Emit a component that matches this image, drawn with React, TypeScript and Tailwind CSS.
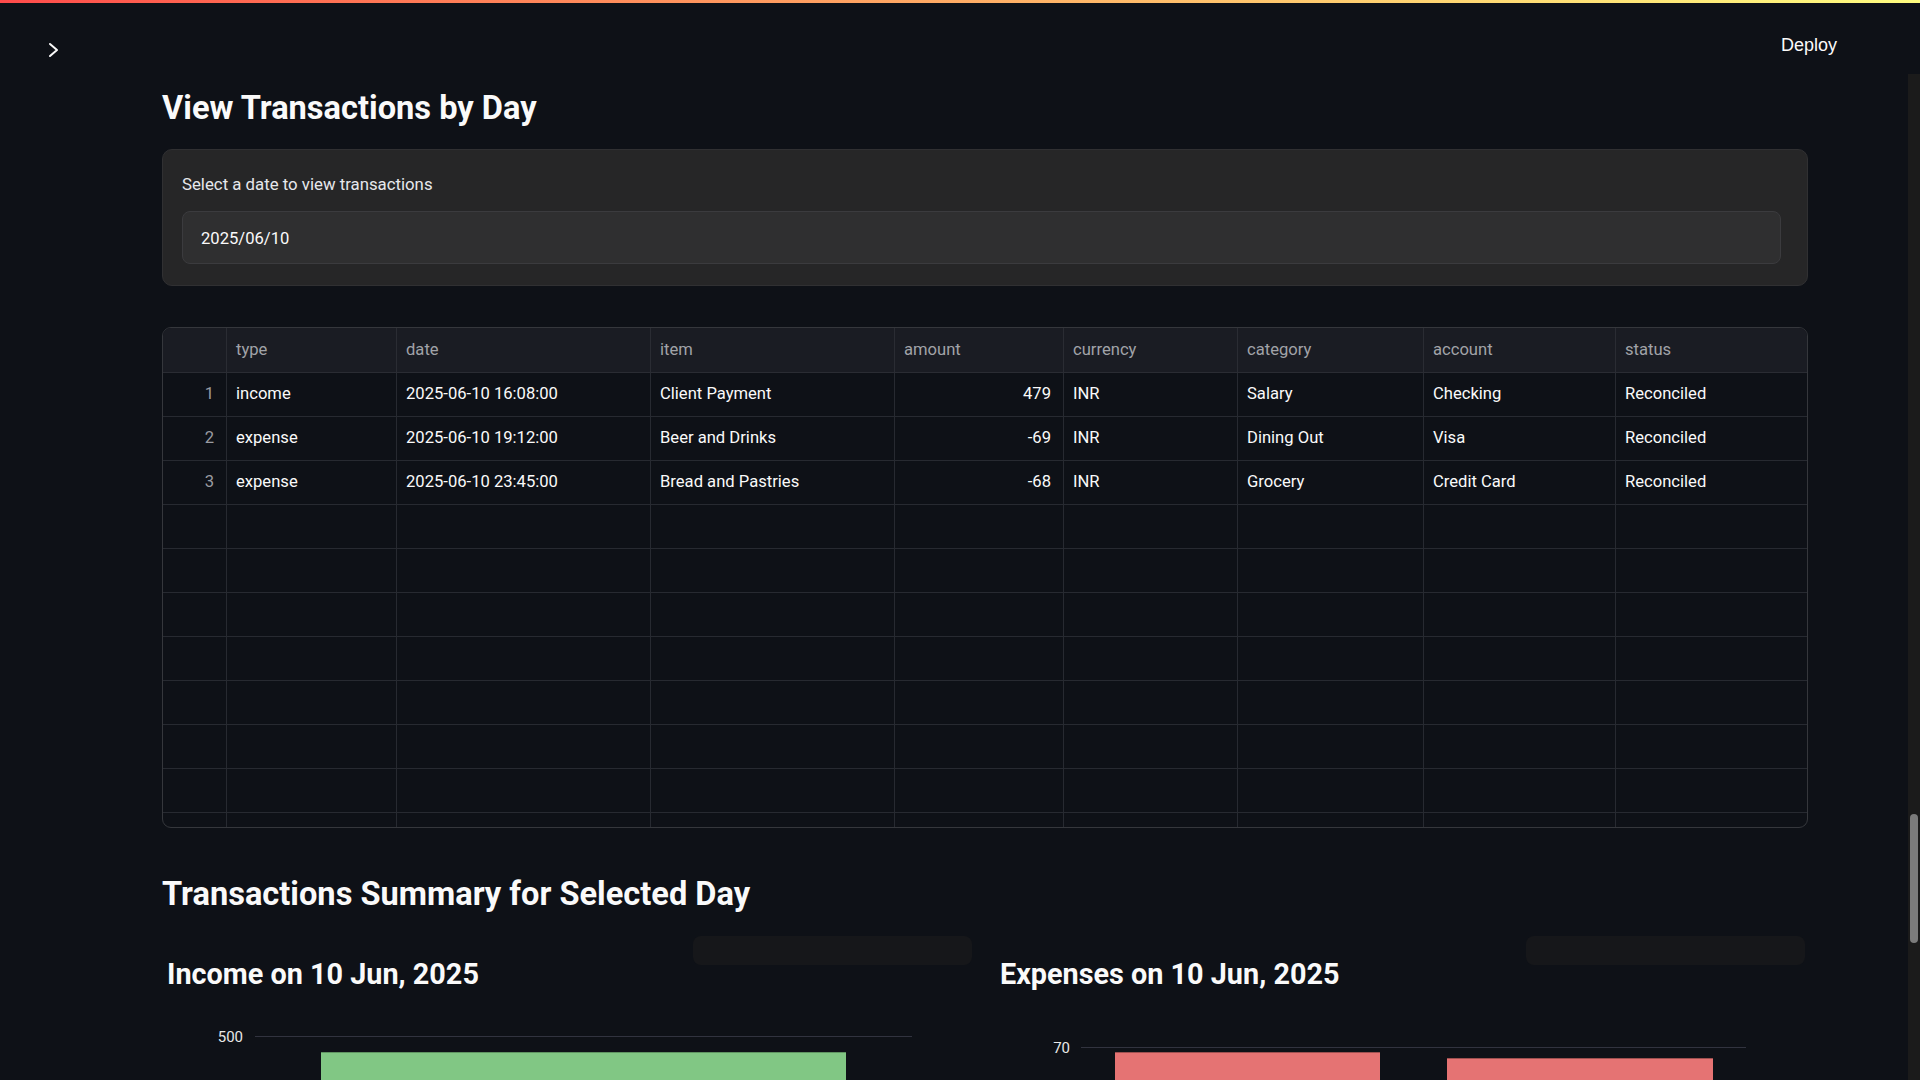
import React from "react";

const COLUMNS = ["type", "date", "item", "amount", "currency", "category", "account", "status"];

const ROWS: string[][] = [
  ["income", "2025-06-10 16:08:00", "Client Payment", "479", "INR", "Salary", "Checking", "Reconciled"],
  ["expense", "2025-06-10 19:12:00", "Beer and Drinks", "-69", "INR", "Dining Out", "Visa", "Reconciled"],
  ["expense", "2025-06-10 23:45:00", "Bread and Pastries", "-68", "INR", "Grocery", "Credit Card", "Reconciled"],
];

const GRID = "grid grid-cols-[64px_170px_254px_244px_169px_174px_186px_192px_1fr]";

function HeaderRow() {
  return (
    <div className={`${GRID} h-[45px] shrink-0 bg-[#1a1c23] text-[#a1a3a8]`}>
      <div className="border-b border-r border-[#2a2c33]" />
      {COLUMNS.map((col, i) => (
        <div
          key={col}
          className={`flex items-center border-b border-[#2a2c33] pl-[9px] ${i < COLUMNS.length - 1 ? "border-r" : ""}`}
        >
          {col}
        </div>
      ))}
    </div>
  );
}

function DataRow({ index, cells }: { index?: number; cells?: string[] }) {
  return (
    <div className={`${GRID} h-[44px] shrink-0`}>
      <div className="flex items-center justify-end border-b border-r border-[#272a31] pr-[12px] text-[#9a9ca2]">
        {index}
      </div>
      {COLUMNS.map((col, i) => (
        <div
          key={col}
          className={`flex items-center border-b border-[#272a31] ${i < COLUMNS.length - 1 ? "border-r" : ""} ${
            col === "amount" ? "justify-end pr-[12px]" : "pl-[9px]"
          }`}
        >
          {cells?.[i]}
        </div>
      ))}
    </div>
  );
}

function TransactionsTable() {
  return (
    <div className="mt-[41px] flex h-[501px] flex-col overflow-hidden rounded-[9px] border border-[#35373c] text-[16.6px]">
      <HeaderRow />
      {ROWS.map((row, i) => (
        <DataRow key={i} index={i + 1} cells={row} />
      ))}
      {Array.from({ length: 9 }).map((_, i) => (
        <DataRow key={`empty-${i}`} />
      ))}
    </div>
  );
}

function IncomeChart() {
  return (
    <svg width="813" height="100" className="block">
      <line x1="93" y1="44.5" x2="750" y2="44.5" stroke="#31333f" strokeWidth="1" />
      <text x="81" y="49.5" textAnchor="end" fontSize="15" fill="#e8e8e8" fontFamily="Roboto, sans-serif">
        500
      </text>
      <rect x="159" y="60" width="525" height="40" fill="#81c784" />
      <line x1="159" y1="60.5" x2="684" y2="60.5" stroke="#5f9461" strokeWidth="1" />
    </svg>
  );
}

function ExpenseChart() {
  return (
    <svg width="813" height="100" className="block">
      <line x1="86" y1="55.5" x2="751" y2="55.5" stroke="#31333f" strokeWidth="1" />
      <text x="75" y="60.5" textAnchor="end" fontSize="15" fill="#e8e8e8" fontFamily="Roboto, sans-serif">
        70
      </text>
      <rect x="120" y="60" width="265" height="40" fill="#e57373" />
      <line x1="120" y1="60.5" x2="385" y2="60.5" stroke="#9e5050" strokeWidth="1" />
      <rect x="452" y="66" width="266" height="34" fill="#e57373" />
      <line x1="452" y1="66.5" x2="718" y2="66.5" stroke="#9e5050" strokeWidth="1" />
    </svg>
  );
}

function ChartColumn({ title, children }: { title: string; children: React.ReactNode }) {
  return (
    <div className="relative pt-[20px]">
      {/* element toolbar placeholder */}
      <div className="absolute right-[3px] top-0 h-[29px] w-[279px] rounded-[8px] bg-[#16171a]" />
      <h3 className="flex h-[36px] items-center pl-[5px] text-[28.8px] font-bold leading-[36px] text-[#fafafa]">
        {title}
      </h3>
      {children}
    </div>
  );
}

export default function App() {
  return (
    <div className="flex h-screen w-full flex-col overflow-hidden bg-[#0e1117] text-[#fafafa] [font-family:Roboto,sans-serif]">
      <div className="h-[3px] shrink-0 bg-linear-to-r from-[#ff4b4b] to-[#fffd80]" />

      {/* Header */}
      <div className="flex h-[71px] shrink-0 items-start justify-between">
        <button className="ml-[47px] mt-[38px]">
          <svg width="12" height="18" viewBox="0 0 12 18" fill="none" stroke="#fafafa" strokeWidth="2" strokeLinecap="round" strokeLinejoin="round">
            <path d="M3 3 L10 9 L3 15" />
          </svg>
        </button>
        <span className="mr-[83px] mt-[31px] text-[18px] leading-[22px] text-[#fafafa] [font-family:'Liberation_Sans',Arial,sans-serif]">
          Deploy
        </span>
      </div>

      <div className="flex min-h-0 flex-1">
        <main className="min-w-0 flex-1 overflow-hidden pl-[162px]">
          <div className="w-[1646px]">
            <h2 className="mt-[14px] h-[40px] text-[32.6px] font-bold leading-[40px] text-[#fafafa]">
              View Transactions by Day
            </h2>

            {/* Date picker */}
            <div className="mt-[21px] h-[137px] rounded-[10px] border border-[#303032] bg-[#262627] pl-[19px] pr-[26px] pt-[24px]">
              <label className="block h-[20px] text-[16.8px] leading-[20px] text-[#e6e8ec]">
                Select a date to view transactions
              </label>
              <div className="mt-[17px] flex h-[53px] items-center rounded-[8px] border border-[#3b3b3e] bg-[#2f2f30] pl-[18px] pt-[3px] text-[16.6px] text-[#fafafa]">
                2025/06/10
              </div>
            </div>

            <TransactionsTable />

            <h2 className="mt-[46px] h-[40px] text-[32.6px] font-bold leading-[40px] text-[#fafafa]">
              Transactions Summary for Selected Day
            </h2>

            <div className="mt-[22px] grid grid-cols-2 gap-[20px]">
              <ChartColumn title="Income on 10 Jun, 2025">
                <IncomeChart />
              </ChartColumn>
              <ChartColumn title="Expenses on 10 Jun, 2025">
                <ExpenseChart />
              </ChartColumn>
            </div>
          </div>
        </main>

        {/* scrollbar */}
        <div className="relative w-[12px] shrink-0 bg-[#1b1b1b]">
          <div className="absolute left-[2px] top-[740px] h-[129px] w-[8px] rounded-full bg-[#7b7b7b]" />
        </div>
      </div>
    </div>
  );
}
